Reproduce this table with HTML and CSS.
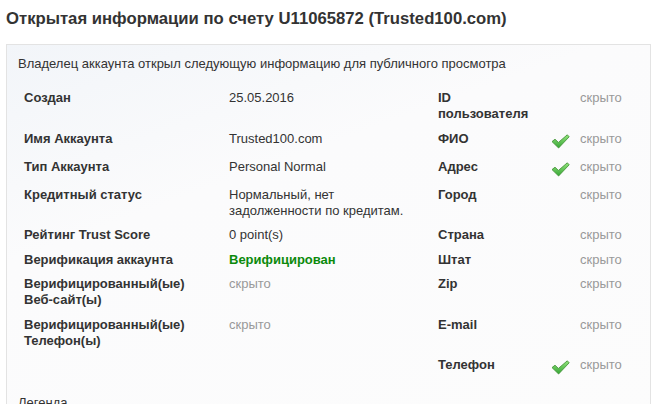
FILE: index.html
```html
<!DOCTYPE html>
<html lang="ru">

<head>
    <meta charset="UTF-8">
    <meta name="viewport" content="width=device-width, initial-scale=1.0">
    <title>Открытая информации по счету U11065872</title>
    <link rel="stylesheet" href="styles.css">
</head>

<body>
    <h2 class="page-title">Открытая информации по счету U11065872 (Trusted100.com)</h2>
    <div class="well">
        <p class="intro">Владелец аккаунта открыл следующую информацию для публичного просмотра</p>
        <svg width="0" height="0" class="defs">
            <defs>
                <linearGradient id="g" x1="0" y1="0" x2="0" y2="1">
                    <stop offset="0" stop-color="#93e57c" />
                    <stop offset="1" stop-color="#35a535" />
                </linearGradient>
            </defs>
        </svg>
        <div class="info-grid">
            <div class="cell label">Создан</div>
            <div class="cell value">25.05.2016</div>
            <div class="cell label">ID пользователя</div>
            <div class="cell"></div>
            <div class="cell hidden">скрыто</div>

            <div class="cell label">Имя Аккаунта</div>
            <div class="cell value">Trusted100.com</div>
            <div class="cell label">ФИО</div>
            <div class="cell icon"><svg class="check" width="19" height="15" viewBox="0 0 19 15"><path d="M1 7.6 L4 5.2 L7.4 8.4 L16.3 0.8 L18.2 2.8 L7.6 14 Z" fill="url(#g)" stroke="#3b8d2e" stroke-width="0.8" stroke-linejoin="round"/></svg></div>
            <div class="cell hidden">скрыто</div>

            <div class="cell label">Тип Аккаунта</div>
            <div class="cell value">Personal Normal</div>
            <div class="cell label">Адрес</div>
            <div class="cell icon"><svg class="check" width="19" height="15" viewBox="0 0 19 15"><path d="M1 7.6 L4 5.2 L7.4 8.4 L16.3 0.8 L18.2 2.8 L7.6 14 Z" fill="url(#g)" stroke="#3b8d2e" stroke-width="0.8" stroke-linejoin="round"/></svg></div>
            <div class="cell hidden">скрыто</div>

            <div class="cell label">Кредитный статус</div>
            <div class="cell value">Нормальный, нет задолженности по кредитам.</div>
            <div class="cell label">Город</div>
            <div class="cell"></div>
            <div class="cell hidden">скрыто</div>

            <div class="cell label">Рейтинг Trust Score</div>
            <div class="cell value">0 point(s)</div>
            <div class="cell label">Страна</div>
            <div class="cell"></div>
            <div class="cell hidden">скрыто</div>

            <div class="cell label">Верификация аккаунта</div>
            <div class="cell value verified">Верифицирован</div>
            <div class="cell label">Штат</div>
            <div class="cell"></div>
            <div class="cell hidden">скрыто</div>

            <div class="cell label">Верифицированный(ые) Веб-сайт(ы)</div>
            <div class="cell value hidden">скрыто</div>
            <div class="cell label">Zip</div>
            <div class="cell"></div>
            <div class="cell hidden">скрыто</div>

            <div class="cell label">Верифицированный(ые) Телефон(ы)</div>
            <div class="cell value hidden">скрыто</div>
            <div class="cell label">E-mail</div>
            <div class="cell"></div>
            <div class="cell hidden">скрыто</div>

            <div class="cell"></div>
            <div class="cell"></div>
            <div class="cell label">Телефон</div>
            <div class="cell icon"><svg class="check" width="19" height="15" viewBox="0 0 19 15"><path d="M1 7.6 L4 5.2 L7.4 8.4 L16.3 0.8 L18.2 2.8 L7.6 14 Z" fill="url(#g)" stroke="#3b8d2e" stroke-width="0.8" stroke-linejoin="round"/></svg></div>
            <div class="cell hidden">скрыто</div>
        </div>
        <p class="legend">Легенда</p>
    </div>
</body>

</html>
```

FILE: styles.css
```css
body {
    margin: 0 0 0 6px;
    padding: 0;
    font-family: Arial, "Liberation Sans", sans-serif;
    font-size: 13px;
    line-height: 16px;
    color: #333;
    background: #fff;
}

.page-title {
    margin: 8px 0 14px;
    font-size: 16.7px;
    line-height: 22px;
    font-weight: bold;
    color: #333;
}

.well {
    width: 645px;
    box-sizing: border-box;
    padding: 11px 11px 20px;
    border: 1px solid #e3e3e3;
    background: linear-gradient(160deg, #f2f5f9 0%, #fbfbfc 35%, #fcfcfc 100%);
}

.defs {
    position: absolute;
}

.intro {
    margin: 0 0 14px;
}

.info-grid {
    display: grid;
    grid-template-columns: 205px 209px 113px 29px auto;
    padding-left: 6px;
}

.cell {
    padding: 4px 0 4.5px;
}

.label {
    font-weight: bold;
    padding-right: 42px;
}

.value {
    padding-right: 28px;
}

.hidden {
    color: #999;
}

.verified {
    color: #0b8a0b;
    font-weight: bold;
}

.icon {
    padding: 6px 0 6px;
}

.check {
    display: block;
    margin-top: 1px;
}

.legend {
    margin: 14px 0 0;
}
```
